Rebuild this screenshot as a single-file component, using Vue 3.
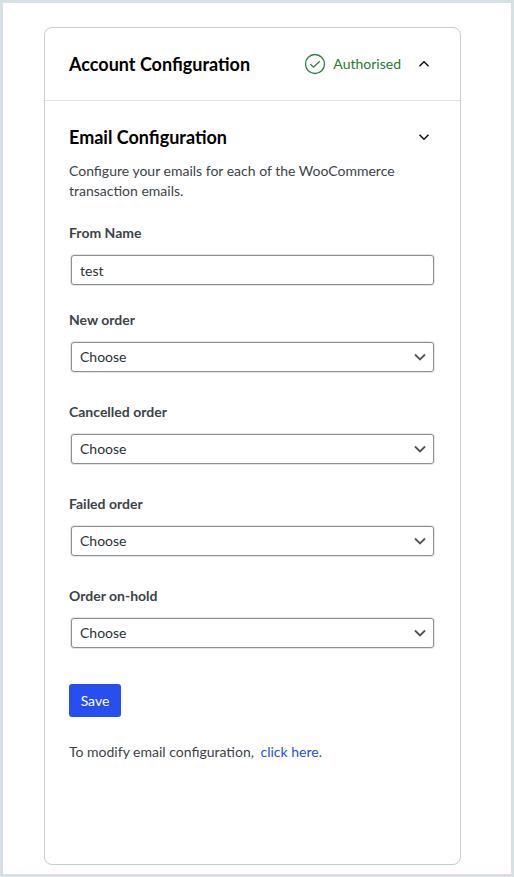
<script setup>
import { reactive, ref } from 'vue'

const fromName = ref('test')
const orderEmails = reactive([
  { id: 'new-order', label: 'New order', value: '' },
  { id: 'cancelled-order', label: 'Cancelled order', value: '' },
  { id: 'failed-order', label: 'Failed order', value: '' },
  { id: 'order-on-hold', label: 'Order on-hold', value: '' },
])
</script>

<template>
  <main class="page">
    <div class="card">
      <header class="account">
        <h2 class="title">Account Configuration</h2>
        <span class="status">
          <svg class="check" viewBox="0 0 22 22" aria-hidden="true">
            <circle cx="11" cy="11" r="9.5" />
            <path d="M6.3 11.3 9.5 14.1 15.8 8.2" />
          </svg>
          Authorised
        </span>
        <button class="toggle" type="button" aria-label="Toggle account configuration">
          <svg viewBox="0 0 12 12" aria-hidden="true"><path d="M1.5 8.2 6 3.8 10.5 8.2" /></svg>
        </button>
      </header>

      <section class="email">
        <div class="heading">
          <h2 class="title">Email Configuration</h2>
          <button class="toggle" type="button" aria-label="Toggle email configuration">
            <svg viewBox="0 0 12 12" aria-hidden="true"><path d="M1.5 3.8 6 8.2 10.5 3.8" /></svg>
          </button>
        </div>
        <p class="intro">Configure your emails for each of the WooCommerce transaction emails.</p>

        <form @submit.prevent>
          <div class="field name-field">
            <label for="from-name">From Name</label>
            <input id="from-name" v-model="fromName" class="control" type="text" />
          </div>
          <div v-for="item in orderEmails" :key="item.id" class="field">
            <label :for="item.id">{{ item.label }}</label>
            <div class="select-wrap">
              <select :id="item.id" v-model="item.value" class="control">
                <option value="">Choose</option>
              </select>
              <svg class="arrow" viewBox="0 0 12 12" aria-hidden="true">
                <path d="M1 3.5 6 8.5 11 3.5" />
              </svg>
            </div>
          </div>
          <button class="save" type="submit">Save</button>
        </form>
        <p class="modify">To modify email configuration, <a href="#">click here.</a></p>
      </section>
    </div>
  </main>
</template>

<style>
body {
  margin: 0;
  background: #fff;
}
</style>

<style scoped>
.page {
  box-sizing: border-box;
  min-height: 100vh;
  display: flex;
  padding: 24px 50px 9px 41px;
  border: 3px solid #d7e0e5;
  font-family: Lato, sans-serif;
  font-size: 14px;
  line-height: 20px;
  color: #3c434a;
}

.card {
  flex: 1;
  min-width: 0;
  border: 1px solid #ccc;
  border-radius: 8px;
}

.account,
.heading {
  display: flex;
  align-items: center;
}

.account {
  padding: 24px;
  border-bottom: 1px solid #ddd;
}

.title {
  flex: 1;
  margin: 0;
  font-size: 18px;
  font-weight: 700;
  line-height: 24px;
  color: #000;
}

.status {
  display: flex;
  align-items: center;
  gap: 7px;
  margin-right: 11px;
  color: #2a7a2e;
}

.check {
  width: 22px;
  height: 22px;
  fill: none;
  stroke: #2f8048;
  stroke-width: 1.3;
}

.toggle {
  display: flex;
  padding: 6px;
  border: 0;
  background: none;
}

.toggle svg {
  width: 12px;
  height: 12px;
  fill: none;
  stroke: #111;
  stroke-width: 1.5;
}

.email {
  padding: 24px 24px 96px;
}

.intro {
  margin: 12px 0 22px;
}

.field {
  display: flex;
  flex-direction: column;
  gap: 12px;
  margin-bottom: 30px;
}

.name-field {
  margin-bottom: 25px;
}

label {
  font-weight: 700;
}

.control {
  box-sizing: border-box;
  height: 30px;
  margin: 0 2px;
  padding: 0 8px;
  border: 1px solid #8c8f94;
  border-radius: 3px;
  box-shadow: 0 0 0 1px #e4e5e7;
  background: #fff;
  color: #2c3338;
  font: inherit;
  appearance: none;
}

.select-wrap {
  position: relative;
  display: flex;
}

.select-wrap .control {
  flex: 1;
}

.arrow {
  position: absolute;
  top: 9px;
  right: 10px;
  width: 12px;
  height: 12px;
  fill: none;
  stroke: #50565b;
  stroke-width: 1.8;
  pointer-events: none;
}

.save {
  display: block;
  min-width: 52px;
  margin-top: 36px;
  padding: 6px 11px;
  border: 0;
  border-radius: 3px;
  background: #274ff0;
  color: #fff;
  font: inherit;
  line-height: 21px;
}

.modify {
  margin: 25px 0 0;
}

.modify a {
  margin-left: 3px;
  color: #274ff0;
  text-decoration: none;
}
</style>
